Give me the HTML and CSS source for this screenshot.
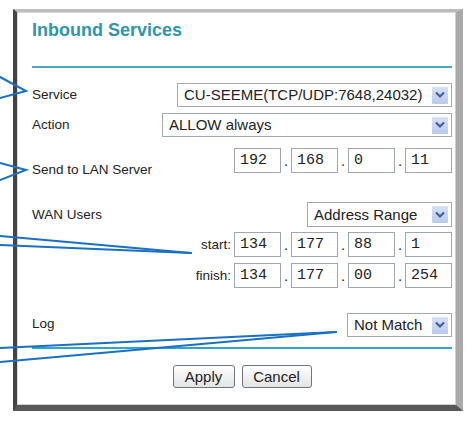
FILE: index.html
```html
<!DOCTYPE html>
<html>
<head>
<meta charset="utf-8">
<link rel="stylesheet" href="styles.css">
</head>
<body>
<div class="frame">
  <h1 class="title">Inbound Services</h1>
  <div class="rule rule-top"></div>

  <div class="row row-service">
    <span class="label">Service</span>
    <div class="select sel-service">
      <span class="sel-text">CU-SEEME(TCP/UDP:7648,24032)</span>
      <span class="sel-btn"><svg width="12" height="10" viewBox="0 0 12 10"><path d="M2 2.5 L6 6.5 L10 2.5" fill="none" stroke="#45608f" stroke-width="2.2"/></svg></span>
    </div>
  </div>

  <div class="row row-action">
    <span class="label">Action</span>
    <div class="select sel-action">
      <span class="sel-text">ALLOW always</span>
      <span class="sel-btn"><svg width="12" height="10" viewBox="0 0 12 10"><path d="M2 2.5 L6 6.5 L10 2.5" fill="none" stroke="#45608f" stroke-width="2.2"/></svg></span>
    </div>
  </div>

  <div class="row row-lan">
    <span class="label label-lan">Send to LAN Server</span>
    <div class="ip">
      <input class="oct" type="text" value="192"><span class="dot">.</span><input class="oct" type="text" value="168"><span class="dot">.</span><input class="oct" type="text" value="0"><span class="dot">.</span><input class="oct" type="text" value="11">
    </div>
  </div>

  <div class="row row-wan">
    <span class="label">WAN Users</span>
    <div class="select sel-range">
      <span class="sel-text">Address Range</span>
      <span class="sel-btn"><svg width="12" height="10" viewBox="0 0 12 10"><path d="M2 2.5 L6 6.5 L10 2.5" fill="none" stroke="#45608f" stroke-width="2.2"/></svg></span>
    </div>
  </div>

  <div class="row row-start">
    <span class="label label-ip">start:</span>
    <div class="ip">
      <input class="oct" type="text" value="134"><span class="dot">.</span><input class="oct" type="text" value="177"><span class="dot">.</span><input class="oct" type="text" value="88"><span class="dot">.</span><input class="oct" type="text" value="1">
    </div>
  </div>

  <div class="row row-finish">
    <span class="label label-ip">finish:</span>
    <div class="ip">
      <input class="oct" type="text" value="134"><span class="dot">.</span><input class="oct" type="text" value="177"><span class="dot">.</span><input class="oct" type="text" value="00"><span class="dot">.</span><input class="oct" type="text" value="254">
    </div>
  </div>

  <div class="row row-log">
    <span class="label label-log">Log</span>
    <div class="select sel-log">
      <span class="sel-text">Not Match</span>
      <span class="sel-btn"><svg width="12" height="10" viewBox="0 0 12 10"><path d="M2 2.5 L6 6.5 L10 2.5" fill="none" stroke="#45608f" stroke-width="2.2"/></svg></span>
    </div>
  </div>

  <div class="rule rule-bottom"></div>

  <div class="buttons">
    <button class="btn btn-apply">Apply</button>
    <button class="btn btn-cancel">Cancel</button>
  </div>
</div>

<svg class="callouts" width="473" height="427" viewBox="0 0 473 427">
  <g fill="none" stroke="#1a70c2" stroke-width="2" stroke-linecap="round">
    <polyline points="0,77 26,91 0,98"/>
    <polyline points="0,163 26,170 0,180"/>
    <line x1="0" y1="236" x2="191" y2="253"/>
    <line x1="0" y1="245" x2="191" y2="253"/>
    <line x1="0" y1="348" x2="336" y2="332"/>
    <line x1="0" y1="362" x2="336" y2="332"/>
  </g>
</svg>
</body>
</html>
```

FILE: styles.css
```css
html, body {
  margin: 0;
  padding: 0;
  background: #ffffff;
}

body {
  position: relative;
  width: 473px;
  height: 427px;
  overflow: hidden;
  font-family: "Liberation Sans", Arial, sans-serif;
  color: #222222;
}

.frame {
  box-sizing: border-box;
  width: 450px;
  height: 402px;
  margin: 9px 0 0 13px;
  padding: 7px 4px 0 15px;
  border-left: 4px solid #444444;
  border-top: 3px solid #bdbdbd;
  border-right: 7px solid #a9a9a9;
  border-bottom: 6px solid #575757;
  background: #ffffff;
  box-shadow: inset 1px 1px 0 #d8d8d8, inset -1px -1px 0 #d0d0d0;
}

.title {
  margin: 0;
  font-size: 18px;
  line-height: 22px;
  font-weight: bold;
  color: #2f96ac;
}

.rule {
  height: 2px;
}

.rule-top {
  margin-top: 25px;
  background: #48a8ba;
}

.rule-bottom {
  margin-top: 10px;
  background: #2fa4cf;
}

.row {
  display: flex;
  justify-content: space-between;
  align-items: center;
}

.label {
  font-size: 13.5px;
  line-height: 16px;
  color: #222222;
  white-space: nowrap;
}

.row-service { margin-top: 15px; height: 24px; }
.row-action  { margin-top: 6px;  height: 24px; }
.row-lan     { margin-top: 11px; height: 25px; align-items: flex-start; }
.row-wan     { margin-top: 29px; height: 25px; }
.row-start   { margin-top: 5px;  height: 25px; justify-content: flex-end; gap: 3px; }
.row-finish  { margin-top: 6px;  height: 25px; justify-content: flex-end; gap: 3px; }
.row-log     { margin-top: 25px; height: 24px; align-items: flex-start; }

.label-lan { margin-top: 14px; }
.label-log { margin-top: 3px; }

.select {
  box-sizing: border-box;
  display: flex;
  align-items: center;
  height: 24px;
  border: 1px solid #a3a9b0;
  background: #ffffff;
}

.sel-service { width: 275px; }
.sel-action  { width: 290px; }
.sel-range   { width: 145px; height: 25px; }
.sel-log     { width: 105px; }

.sel-text {
  flex: 1;
  padding-left: 6px;
  font-size: 15px;
  line-height: 18px;
  color: #222222;
  white-space: nowrap;
  overflow: hidden;
}

.sel-btn {
  display: flex;
  align-items: center;
  justify-content: center;
  width: 16px;
  height: 17px;
  margin-right: 3px;
  background: linear-gradient(#d6e1f7, #b9caee);
  border-radius: 1px;
}

.ip {
  display: flex;
  align-items: center;
  height: 25px;
}

.oct {
  box-sizing: border-box;
  width: 47px;
  height: 25px;
  margin: 0;
  padding: 0 0 0 5px;
  border: 1px solid #a0a6ad;
  border-radius: 0;
  background: #ffffff;
  font-family: "Liberation Mono", "Courier New", monospace;
  font-size: 15px;
  color: #222222;
  outline: none;
}

.dot {
  width: 10px;
  text-align: center;
  font-size: 15px;
  line-height: 25px;
  color: #222222;
}

.buttons {
  display: flex;
  justify-content: center;
  gap: 7px;
  margin-top: 16px;
}

.btn {
  box-sizing: border-box;
  height: 23px;
  padding: 0;
  border: 1px solid #6c7580;
  border-radius: 3px;
  background: linear-gradient(#ffffff, #e4e4e4);
  font-family: "Liberation Sans", Arial, sans-serif;
  font-size: 15px;
  color: #222222;
}

.btn-apply  { width: 62px; }
.btn-cancel { width: 70px; }

.callouts {
  position: absolute;
  left: 0;
  top: 0;
  pointer-events: none;
}
```
